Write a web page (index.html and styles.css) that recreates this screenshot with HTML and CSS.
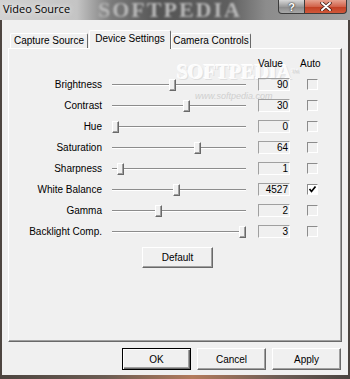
FILE: index.html
```html
<!DOCTYPE html>
<html lang="en">
<head>
  <meta charset="UTF-8" />
  <title>Video Source</title>
  <link rel="stylesheet" href="styles.css">
</head>
<body>
  <div class="window">
    <header class="titlebar">
      <div class="title-mark">SOFTPEDIA</div>
      <div class="title">Video Source</div>
      <div class="caption-btns">
        <div class="cap-btn help">?</div>
        <div class="cap-btn close">
          <svg width="12" height="9" viewBox="0 0 12 9">
            <path d="M2 1 L10 8 M10 1 L2 8" stroke="#3a1a14" stroke-width="3.4" stroke-linecap="round"/>
            <path d="M2 1 L10 8 M10 1 L2 8" stroke="#fff" stroke-width="1.9" stroke-linecap="round"/>
          </svg>
        </div>
      </div>
    </header>

    <div class="client">
      <div class="tabs">
        <div class="tab tab-capture">Capture Source</div>
        <div class="tab tab-device active">Device Settings</div>
        <div class="tab tab-camera">Camera Controls</div>
      </div>

      <div class="panel">
        <div class="mark">SOFTPEDIA<span class="tm">™</span></div>
        <div class="mark-url">www.softpedia.com</div>

        <div class="row head">
          <div class="label"></div>
          <div class="slider-space"></div>
          <div class="h-value">Value</div>
          <div class="h-auto">Auto</div>
        </div>

        <div class="row">
          <div class="label">Brightness</div>
          <div class="slider"><span class="thumb" style="left: 57px"></span></div>
          <div class="value">90</div>
          <div class="check"></div>
        </div>
        <div class="row">
          <div class="label">Contrast</div>
          <div class="slider"><span class="thumb" style="left: 71px"></span></div>
          <div class="value">30</div>
          <div class="check"></div>
        </div>
        <div class="row">
          <div class="label">Hue</div>
          <div class="slider"><span class="thumb" style="left: 0px"></span></div>
          <div class="value">0</div>
          <div class="check"></div>
        </div>
        <div class="row">
          <div class="label">Saturation</div>
          <div class="slider"><span class="thumb" style="left: 82px"></span></div>
          <div class="value">64</div>
          <div class="check"></div>
        </div>
        <div class="row">
          <div class="label">Sharpness</div>
          <div class="slider"><span class="thumb" style="left: 5px"></span></div>
          <div class="value">1</div>
          <div class="check"></div>
        </div>
        <div class="row">
          <div class="label">White Balance</div>
          <div class="slider"><span class="thumb" style="left: 61px"></span></div>
          <div class="value">4527</div>
          <div class="check checked">
            <svg width="9" height="9" viewBox="0 0 9 9">
              <polyline points="1.5,4 3.5,6.5 7.5,1.5" fill="none" stroke="#000" stroke-width="1.7"/>
            </svg>
          </div>
        </div>
        <div class="row">
          <div class="label">Gamma</div>
          <div class="slider"><span class="thumb" style="left: 43px"></span></div>
          <div class="value">2</div>
          <div class="check"></div>
        </div>
        <div class="row">
          <div class="label">Backlight Comp.</div>
          <div class="slider"><span class="thumb" style="left: 127px"></span></div>
          <div class="value">3</div>
          <div class="check"></div>
        </div>

        <button class="btn default-btn">Default</button>
      </div>

      <div class="actions">
        <button class="btn primary">OK</button>
        <button class="btn">Cancel</button>
        <button class="btn">Apply</button>
      </div>
    </div>
  </div>
</body>
</html>
```

FILE: styles.css
```css
body {
  margin: 0;
  width: 350px;
  height: 379px;
  overflow: hidden;
  font-family: 'Liberation Sans', Arial, sans-serif;
  font-size: 10px;
  color: #000;
  background: linear-gradient(90deg, #4d4540 0, #6b5c52 30%, #b27a5c 55%, #6d5d55 80%, #4a4440 100%);
}

.window {
  display: flex;
  flex-direction: column;
  height: 379px;
}

/* title bar */

.titlebar {
  position: relative;
  height: 20px;
  display: flex;
  align-items: flex-start;
  overflow: hidden;
  background: linear-gradient(90deg, #d2d2d2 0, #c4c4c4 22%, #7a7a7a 32%, #555 45%, #5e5e5e 65%, #8c8c8c 76%, #a2a2a2 100%);
}

.title-mark {
  position: absolute;
  left: 98px;
  top: 1px;
  font-family: 'Liberation Serif', serif;
  font-weight: bold;
  font-size: 22px;
  line-height: 18px;
  letter-spacing: 2px;
  color: #b8b8b8;
  filter: blur(1.2px);
}

.title {
  position: relative;
  font-family: 'Open Sans', 'Liberation Sans', sans-serif;
  font-size: 11px;
  line-height: 18px;
  padding-left: 3px;
  text-shadow: 0 0 4px #e8e8e8, 0 0 6px #e8e8e8;
}

.caption-btns {
  position: relative;
  margin-left: auto;
  margin-right: 3px;
  display: flex;
}

.cap-btn {
  height: 14px;
  box-sizing: border-box;
  border: 1px solid #3c3c3c;
  border-top: none;
  display: flex;
  align-items: center;
  justify-content: center;
}

.help {
  width: 27px;
  border-radius: 0 0 0 4px;
  background: linear-gradient(#d8d8d8, #9c9c9c 50%, #8a8a8a 51%, #a8a8a8);
  color: #fff;
  font-weight: bold;
  font-size: 11px;
  text-shadow: 0 0 2px #333, 0 0 1px #333;
}

.close {
  width: 42px;
  border-left: none;
  border-radius: 0 0 4px 0;
  background: linear-gradient(#e6a290, #d2644c 50%, #c13e22 51%, #d0583a);
}

/* client area */

.client {
  flex: 1;
  margin: 0 2px 4px 2px;
  padding: 10px 6px 5px 6px;
  background: #f0f0f0;
  display: flex;
  flex-direction: column;
}

.tabs {
  display: flex;
  align-items: flex-end;
  height: 18px;
  padding-left: 2px;
}

.tab {
  box-sizing: border-box;
  height: 15px;
  border: 1px solid;
  border-color: #fff #696969 transparent #fff;
  border-bottom: none;
  border-radius: 2px 2px 0 0;
  text-align: center;
  line-height: 14px;
  white-space: nowrap;
}

.tab-capture { width: 78px; }
.tab-device { width: 82px; margin-left: 1px; }
.tab-camera { width: 80px; }

.tab.active {
  position: relative;
  z-index: 1;
  height: 19px;
  margin-bottom: -1px;
  line-height: 16px;
  background: #f0f0f0;
}

.panel {
  position: relative;
  height: 294px;
  box-sizing: border-box;
  padding-top: 4px;
  border: 1px solid;
  border-color: #fff #696969 #696969 #fff;
  box-shadow: inset -1px -1px 0 #a0a0a0;
}

.mark {
  position: absolute;
  left: 168px;
  top: 16px;
  font-family: 'Liberation Serif', serif;
  font-weight: bold;
  font-size: 20px;
  line-height: 15px;
  color: #fbfbfb;
  text-shadow: 1px 1px 0 #dedede, -1px -1px 0 #fff;
}

.mark .tm {
  font-size: 8px;
  vertical-align: top;
  color: #d8d8d8;
}

.mark-url {
  position: absolute;
  left: 186px;
  top: 42px;
  font-size: 9px;
  line-height: 10px;
  font-style: italic;
  color: #cfcfcf;
}

.row {
  position: relative;
  display: flex;
  align-items: center;
  height: 21px;
}

.label {
  width: 93px;
  text-align: right;
  white-space: nowrap;
}

.slider-space {
  width: 134px;
  margin-left: 10px;
}

.h-value {
  width: 32px;
  margin-left: 12px;
}

.h-auto {
  margin-left: 10px;
}

.slider {
  position: relative;
  width: 134px;
  height: 13px;
  margin-left: 10px;
}

.slider::before {
  content: "";
  position: absolute;
  left: 0;
  right: 0;
  top: 6px;
  height: 1px;
  border-top: 1px solid #8c8c8c;
  background: #fff;
}

.thumb {
  position: absolute;
  top: 1px;
  width: 7px;
  height: 12px;
  box-sizing: border-box;
  background: #f0f0f0;
  border: 1px solid;
  border-color: #fff #696969 #696969 #fff;
  box-shadow: inset -1px -1px 0 #a0a0a0;
}

.value {
  width: 32px;
  height: 13px;
  margin-left: 12px;
  box-sizing: border-box;
  border: 1px solid;
  border-color: #a0a0a0 #fff #fff #a0a0a0;
  text-align: right;
  padding-right: 1px;
  line-height: 11px;
}

.check {
  width: 11px;
  height: 11px;
  margin-left: 17px;
  box-sizing: border-box;
  border: 1px solid;
  border-color: #8c8c8c #fff #fff #8c8c8c;
  display: flex;
  align-items: center;
  justify-content: center;
}

.check.checked {
  background: #fff;
}

/* buttons */

.btn {
  box-sizing: border-box;
  margin: 0;
  padding: 0;
  font-family: inherit;
  font-size: 10px;
  color: #000;
  background: #f0f0f0;
  border: 1px solid;
  border-color: #fff #696969 #696969 #fff;
  box-shadow: inset -1px -1px 0 #a0a0a0;
}

.default-btn {
  width: 71px;
  height: 21px;
  margin: 5px 0 0 133px;
}

.actions {
  display: flex;
  justify-content: flex-end;
  gap: 6px;
  margin: 6px 1px 0 0;
}

.actions .btn {
  width: 69px;
  height: 22px;
}

.actions .btn.primary {
  border-color: #000;
  box-shadow: inset 1px 1px 0 #fff, inset -1px -1px 0 #696969, inset -2px -2px 0 #a0a0a0;
}
```
